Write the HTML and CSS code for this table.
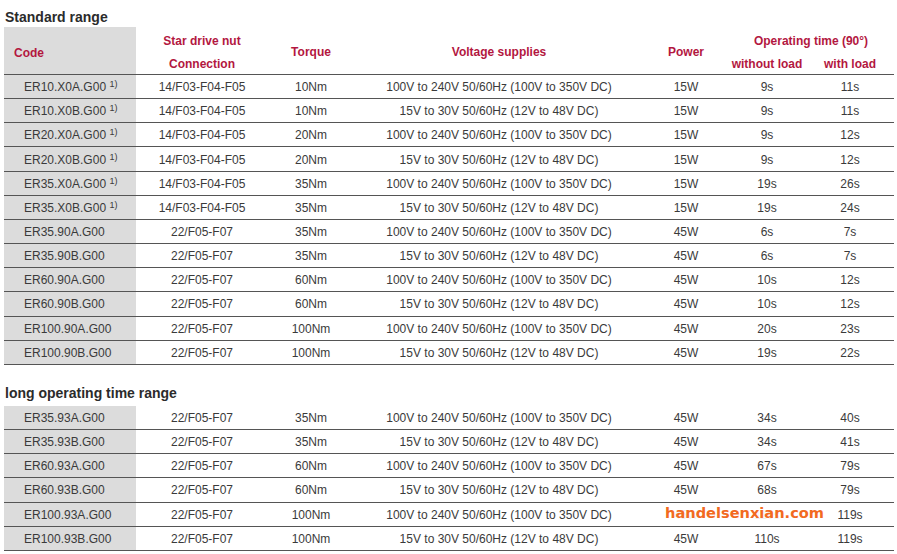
FILE: index.html
```html
<!DOCTYPE html>
<html>
<head>
<meta charset="utf-8">
<title>Standard range</title>
<link rel="stylesheet" href="styles.css">
</head>
<body>
<div class="page">
  <h2 class="range-title first">Standard range</h2>
  <table class="spec">
    <colgroup>
      <col class="c-code"><col class="c-nut"><col class="c-torque"><col class="c-volt"><col class="c-power"><col class="c-t1"><col class="c-t2">
    </colgroup>
    <thead>
      <tr class="h1">
        <th rowspan="2" class="code head-code">Code</th>
        <th>Star drive nut</th>
        <th rowspan="2" class="mid">Torque</th>
        <th rowspan="2" class="mid">Voltage supplies</th>
        <th rowspan="2" class="mid">Power</th>
        <th colspan="2">Operating time (90°)</th>
      </tr>
      <tr class="h2">
        <th>Connection</th>
        <th>without load</th>
        <th>with load</th>
      </tr>
    </thead>
    <tbody>
      <tr><td class="code">ER10.X0A.G00 <sup>1)</sup></td><td>14/F03-F04-F05</td><td>10Nm</td><td>100V to 240V 50/60Hz (100V to 350V DC)</td><td>15W</td><td>9s</td><td>11s</td></tr>
      <tr><td class="code">ER10.X0B.G00 <sup>1)</sup></td><td>14/F03-F04-F05</td><td>10Nm</td><td>15V to 30V 50/60Hz (12V to 48V DC)</td><td>15W</td><td>9s</td><td>11s</td></tr>
      <tr><td class="code">ER20.X0A.G00 <sup>1)</sup></td><td>14/F03-F04-F05</td><td>20Nm</td><td>100V to 240V 50/60Hz (100V to 350V DC)</td><td>15W</td><td>9s</td><td>12s</td></tr>
      <tr><td class="code">ER20.X0B.G00 <sup>1)</sup></td><td>14/F03-F04-F05</td><td>20Nm</td><td>15V to 30V 50/60Hz (12V to 48V DC)</td><td>15W</td><td>9s</td><td>12s</td></tr>
      <tr><td class="code">ER35.X0A.G00 <sup>1)</sup></td><td>14/F03-F04-F05</td><td>35Nm</td><td>100V to 240V 50/60Hz (100V to 350V DC)</td><td>15W</td><td>19s</td><td>26s</td></tr>
      <tr><td class="code">ER35.X0B.G00 <sup>1)</sup></td><td>14/F03-F04-F05</td><td>35Nm</td><td>15V to 30V 50/60Hz (12V to 48V DC)</td><td>15W</td><td>19s</td><td>24s</td></tr>
      <tr><td class="code">ER35.90A.G00</td><td>22/F05-F07</td><td>35Nm</td><td>100V to 240V 50/60Hz (100V to 350V DC)</td><td>45W</td><td>6s</td><td>7s</td></tr>
      <tr><td class="code">ER35.90B.G00</td><td>22/F05-F07</td><td>35Nm</td><td>15V to 30V 50/60Hz (12V to 48V DC)</td><td>45W</td><td>6s</td><td>7s</td></tr>
      <tr><td class="code">ER60.90A.G00</td><td>22/F05-F07</td><td>60Nm</td><td>100V to 240V 50/60Hz (100V to 350V DC)</td><td>45W</td><td>10s</td><td>12s</td></tr>
      <tr><td class="code">ER60.90B.G00</td><td>22/F05-F07</td><td>60Nm</td><td>15V to 30V 50/60Hz (12V to 48V DC)</td><td>45W</td><td>10s</td><td>12s</td></tr>
      <tr><td class="code">ER100.90A.G00</td><td>22/F05-F07</td><td>100Nm</td><td>100V to 240V 50/60Hz (100V to 350V DC)</td><td>45W</td><td>20s</td><td>23s</td></tr>
      <tr><td class="code">ER100.90B.G00</td><td>22/F05-F07</td><td>100Nm</td><td>15V to 30V 50/60Hz (12V to 48V DC)</td><td>45W</td><td>19s</td><td>22s</td></tr>
    </tbody>
  </table>

  <h2 class="range-title second">long operating time range</h2>
  <table class="spec">
    <colgroup>
      <col class="c-code"><col class="c-nut"><col class="c-torque"><col class="c-volt"><col class="c-power"><col class="c-t1"><col class="c-t2">
    </colgroup>
    <tbody>
      <tr><td class="code">ER35.93A.G00</td><td>22/F05-F07</td><td>35Nm</td><td>100V to 240V 50/60Hz (100V to 350V DC)</td><td>45W</td><td>34s</td><td>40s</td></tr>
      <tr><td class="code">ER35.93B.G00</td><td>22/F05-F07</td><td>35Nm</td><td>15V to 30V 50/60Hz (12V to 48V DC)</td><td>45W</td><td>34s</td><td>41s</td></tr>
      <tr><td class="code">ER60.93A.G00</td><td>22/F05-F07</td><td>60Nm</td><td>100V to 240V 50/60Hz (100V to 350V DC)</td><td>45W</td><td>67s</td><td>79s</td></tr>
      <tr><td class="code">ER60.93B.G00</td><td>22/F05-F07</td><td>60Nm</td><td>15V to 30V 50/60Hz (12V to 48V DC)</td><td>45W</td><td>68s</td><td>79s</td></tr>
      <tr><td class="code">ER100.93A.G00</td><td>22/F05-F07</td><td>100Nm</td><td>100V to 240V 50/60Hz (100V to 350V DC)</td><td>45W</td><td>110s</td><td>119s</td></tr>
      <tr><td class="code">ER100.93B.G00</td><td>22/F05-F07</td><td>100Nm</td><td>15V to 30V 50/60Hz (12V to 48V DC)</td><td>45W</td><td>110s</td><td>119s</td></tr>
    </tbody>
  </table>

  <div class="watermark">handelsenxian.com</div>
</div>
</body>
</html>
```

FILE: styles.css
```css
html, body {
  margin: 0;
  padding: 0;
  background: #ffffff;
}

.page {
  position: relative;
  padding-left: 4px;
  font-family: "Liberation Sans", Arial, sans-serif;
  color: #3a3a3a;
  font-size: 12px;
}

.range-title {
  margin: 0;
  font-size: 14px;
  line-height: 19px;
  font-weight: bold;
  color: #2b2b2b;
  padding-left: 1px;
}

.range-title.first {
  margin-top: 8px;
}

.range-title.second {
  margin-top: 19px;
  margin-bottom: 3px;
}

.spec {
  border-collapse: separate;
  border-spacing: 0;
  table-layout: fixed;
  width: 890px;
}

.c-code { width: 132px; }
.c-nut { width: 132px; }
.c-torque { width: 86px; }
.c-volt { width: 290px; }
.c-power { width: 84px; }
.c-t1 { width: 78px; }
.c-t2 { width: 88px; }

.spec th,
.spec td {
  padding: 1px 0 0 0;
  text-align: center;
  vertical-align: middle;
  white-space: nowrap;
  line-height: 14px;
}

.spec th {
  color: #b3173f;
  font-weight: bold;
  padding-top: 4px;
}

.spec thead tr.h1 { height: 23.5px; }
.spec thead tr.h2 { height: 24.5px; }

.spec thead tr.h2 th,
.spec thead th.mid,
.spec thead th.head-code {
  border-bottom: 1px solid #555555;
}

.spec th.mid {
  padding-top: 3px;
}

.spec tbody tr {
  height: 24.17px;
}

.spec tbody td {
  border-bottom: 1px solid #555555;
}

.spec .code {
  background: #dcdcdc;
  text-align: left;
  padding-left: 20px;
}

.spec th.head-code {
  padding-left: 10px;
  padding-top: 5px;
}

.spec sup {
  font-size: 9px;
  line-height: 0;
  vertical-align: 4px;
}

.watermark {
  position: absolute;
  left: 664px;
  top: 498px;
  padding: 0 1px;
  background: rgba(255, 255, 255, 0.92);
  color: #f26a1f;
  font-family: "DejaVu Sans", Verdana, sans-serif;
  font-weight: bold;
  font-size: 14.6px;
  line-height: 14px;
}
```
